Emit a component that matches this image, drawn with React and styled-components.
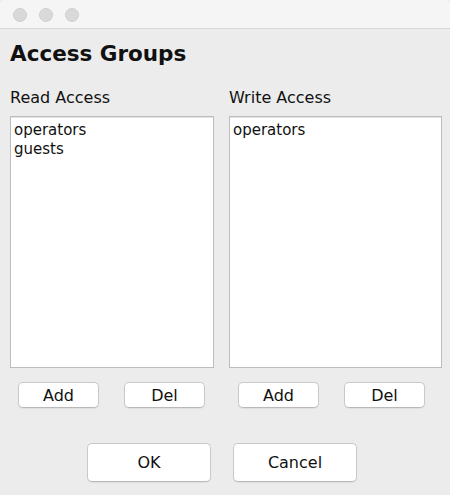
import React, { useState } from 'react';
import styled, { createGlobalStyle } from 'styled-components';

const GlobalStyle = createGlobalStyle`
  html, body {
    margin: 0;
    padding: 0;
    background: #ececec;
  }
  * {
    box-sizing: border-box;
  }
`;

const App = () => {
  const [readGroups] = useState(['operators', 'guests']);
  const [writeGroups] = useState(['operators']);

  return (
    <>
      <GlobalStyle />
      <Window>
        <TitleBar>
          <Light />
          <Light />
          <Light />
        </TitleBar>
        <Content>
          <Heading>Access Groups</Heading>
          <Columns>
            <Column>
              <Label>Read Access</Label>
              <ListBox $width={204}>
                {readGroups.map((g) => (
                  <ListItem key={g}>{g}</ListItem>
                ))}
              </ListBox>
              <ButtonRow $indent={8}>
                <SmallButton>Add</SmallButton>
                <SmallButton>Del</SmallButton>
              </ButtonRow>
            </Column>
            <Column>
              <Label>Write Access</Label>
              <ListBox $width={213}>
                {writeGroups.map((g) => (
                  <ListItem key={g}>{g}</ListItem>
                ))}
              </ListBox>
              <ButtonRow $indent={9}>
                <SmallButton>Add</SmallButton>
                <SmallButton>Del</SmallButton>
              </ButtonRow>
            </Column>
          </Columns>
          <Footer>
            <DialogButton>OK</DialogButton>
            <DialogButton>Cancel</DialogButton>
          </Footer>
        </Content>
      </Window>
    </>
  );
};

export default App;

// Styled Components
const Window = styled.div`
  width: 450px;
  height: 495px;
  background: #ececec;
  font-family: "DejaVu Sans", "Liberation Sans", sans-serif;
  color: #111;
  overflow: hidden;
  border-radius: 5px 5px 0 0;
`;

const TitleBar = styled.div`
  height: 29px;
  background: #f5f5f5;
  border-bottom: 1px solid #d6d6d6;
  display: flex;
  align-items: center;
  gap: 12px;
  padding: 1px 0 0 13px;
`;

const Light = styled.span`
  width: 14px;
  height: 14px;
  border-radius: 50%;
  background: #d9d9d9;
  border: 1px solid #cfcfcf;
`;

const Content = styled.div`
  padding: 12px 7px 0 10px;
  display: flex;
  flex-direction: column;
`;

const Heading = styled.h1`
  margin: 0;
  font-size: 21.5px;
  line-height: 26px;
  font-weight: bold;
  color: #111;
`;

const Columns = styled.div`
  display: flex;
  gap: 15px;
  margin-top: 21px;
`;

const Column = styled.div`
  display: flex;
  flex-direction: column;
`;

const Label = styled.div`
  font-size: 16px;
  line-height: 19px;
  margin-bottom: 9px;
`;

const ListBox = styled.div`
  width: ${(p) => p.$width}px;
  height: 252px;
  background: #fff;
  border: 1px solid #bcbcbc;
  box-shadow: inset 0 1px 0 #e4e4e4;
  padding: 4px 3px;
`;

const ListItem = styled.div`
  font-size: 15px;
  line-height: 19px;
  color: #111;
`;

const ButtonRow = styled.div`
  display: flex;
  gap: 25px;
  padding-left: ${(p) => p.$indent}px;
  margin-top: 14px;
`;

const SmallButton = styled.button`
  width: 81px;
  height: 26px;
  background: #fff;
  border: 1px solid #c9c9c9;
  border-bottom-color: #b9b9b9;
  border-radius: 5px;
  box-shadow: 0 1px 1px rgba(0, 0, 0, 0.06);
  font-family: "DejaVu Sans", "Liberation Sans", sans-serif;
  font-size: 16px;
  color: #111;
  padding: 0;
  cursor: pointer;
`;

const Footer = styled.div`
  display: flex;
  gap: 22px;
  padding-left: 77px;
  margin-top: 35px;
`;

const DialogButton = styled(SmallButton)`
  width: 124px;
  height: 39px;
  font-size: 16px;
`;
